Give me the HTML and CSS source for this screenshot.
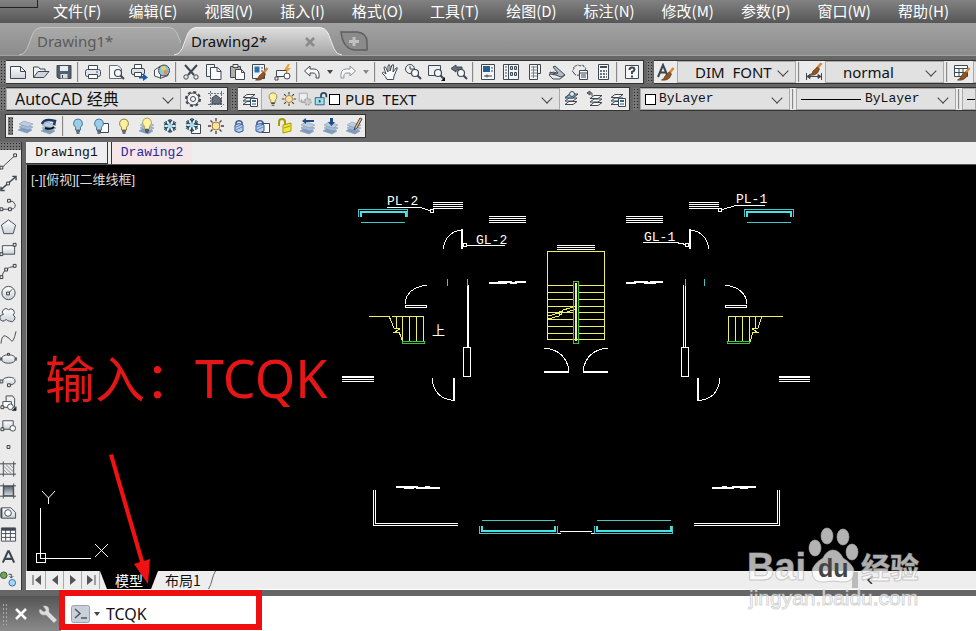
FILE: index.html
```html
<!DOCTYPE html>
<html lang="zh-CN">
<head>
<meta charset="utf-8">
<meta name="viewport" content="width=device-width, initial-scale=1">
<title>Drawing2</title>
<link rel="stylesheet" href="styles.css">
</head>
<body>
<svg class="sprite" aria-hidden="true">
  <defs>
    <linearGradient id="tabIdle" x1="0" y1="0" x2="0" y2="1"><stop offset="0" stop-color="#aaaaaa"/><stop offset="1" stop-color="#969696"/></linearGradient>
    <linearGradient id="tabActive" x1="0" y1="0" x2="0" y2="1"><stop offset="0" stop-color="#dedede"/><stop offset="1" stop-color="#a6a6a6"/></linearGradient>
    <linearGradient id="shade" x1="0" y1="0" x2="0" y2="1"><stop offset="0" stop-color="#5d6670"/><stop offset="1" stop-color="#d9dde2"/></linearGradient>
    <linearGradient id="soft" x1="0" y1="0" x2="0" y2="1"><stop offset="0" stop-color="#ffffff"/><stop offset="1" stop-color="#ccd2d9"/></linearGradient>
    <g id="stack" stroke="#7590ae" stroke-width=".5"><path d="M1 12l5-3 9 3-5 3z" fill="#7f9cc0"/><path d="M2 9l5-3 9 3-5 3z" fill="#a6bbd3"/><path d="M2 6l5-3 9 3-5 3z" fill="#bccde0"/></g>
    <g id="sheets" fill="#f8f8f8" stroke="#3f4852" stroke-width="1"><path d="M2 14.5h8l4-3H6z"/><path d="M2 11h8l4-3H6z"/><path d="M2 7.5h8l4-3H6z"/></g>
    <g id="bulbShape"><path d="M9 2a4.5 4.5 0 0 0-2.500 8.200V13h5v-2.800A4.500 4.500 0 0 0 9 2z" stroke-width="1"/><path d="M7 14h4M7.500 16h3" stroke="#444" stroke-width="1.300"/></g>
    <g id="lens"><circle cx="11" cy="10" r="3.500" fill="#f7fafc" stroke="#3f4852" stroke-width="1.200"/><path d="M13.500 12.500L17 16" stroke="#3f4852" stroke-width="2"/></g>
    <g id="brush"><path d="M16.500 4L12 9.500" stroke="#d28a37" stroke-width="2.500"/><path d="M12.500 8l2 2-2 4q-3 3-8 2 3-1 3.500-4z" fill="#8f5526" stroke="#5c3314" stroke-width=".7"/></g>
    <g id="flake" stroke="#244f63" fill="none" stroke-width="1.300"><path d="M9 2v14M3 5.500l12 7M15 5.500l-12 7"/><path d="M7 3l2 2 2-2M7 15l2-2 2 2M3 8l2.500-1L5 4M15 8l-2.500-1L13 4M3 10l2.500 1L5 14M15 10l-2.500 1L13 14"/><circle cx="9" cy="9" r="2.500" fill="#a9dceb" stroke="none"/></g>
    <g id="lockShape"><path d="M6 8V5.500a3.500 3.500 0 0 1 6 0V8" fill="none" stroke="#335a94" stroke-width="1.500"/><path d="M5 8q4-3 8 0v6q-4 3-8 0z" fill="#b8d0ee" stroke="#335a94"/><path d="M6 10l5-2M6 13l6-3" stroke="#5c84bd"/></g>
    <g id="sunShape"><path d="M9 1v3M9 14v3M1 9h3M14 9h3M3.500 3.500l2 2M12.500 12.500l2 2M14.500 3.500l-2 2M3.500 14.500l2-2" stroke="#444" stroke-width="1.300"/><circle cx="9" cy="9" r="4" fill="#ffe4a0" stroke="#a87338"/></g>
  </defs>
  <symbol id="new" viewBox="0 0 18 18"><path d="M1.500 3.500h10l5 5v7h-15z" fill="url(#soft)"/><path d="M11.500 3.500v5h5"/></symbol>
  <symbol id="open" viewBox="0 0 18 18"><path d="M1.500 14V4h5l1.500 2h5v2" fill="#eef0f2"/><path d="M1.500 14.500l4.500-6h11l-5 6z" fill="#cfd5db"/></symbol>
  <symbol id="save" viewBox="0 0 18 18"><path d="M2 2.500h14v13H3.500L2 14z" fill="#56606b"/><path d="M5 3h8v5H5z" fill="#e6edf4" stroke="none"/><path d="M5.500 11h7v4.500h-7z" fill="#d7dce1" stroke="none"/><path d="M7.500 12v3"/></symbol>
  <symbol id="print" viewBox="0 0 18 18"><path d="M4.500 7V2.500h9V7" fill="#fff"/><rect x="1.500" y="6.500" width="15" height="7" rx="2" fill="#e1e5e9"/><path d="M4.500 11.500h9v4h-9z" fill="#fff"/><path d="M12 9h2"/></symbol>
  <symbol id="preview" viewBox="0 0 18 18"><path d="M2.500 2.500h8l4 3v10h-12z" fill="#f6f7f8" stroke="#68717b"/><use href="#lens"/></symbol>
  <symbol id="publish" viewBox="0 0 18 18"><path d="M4.500 6V1.500h7V6" fill="#fff"/><rect x="1.500" y="5.500" width="13" height="6" rx="1.500" fill="#e1e5e9"/><path d="M4.500 9.500h7v4h-7z" fill="#fff"/><path d="M9 13h4v-2.500l5 4-5 3.500v-2.500H9z" fill="#155da4" stroke="none"/></symbol>
  <symbol id="globe" viewBox="0 0 18 18"><path d="M1.500 7l6-4v12l-6-2z" fill="#f8f8f8"/><path d="M7 15.500l8-3V6" fill="#f8f8f8"/><circle cx="11" cy="7.500" r="5.500" fill="#88c7d8"/><path d="M8 4l4-1 1 3-4 2z" fill="#f1d057" stroke="none"/><path d="M11 8l4-1-1 4-3 1z" fill="#e28a62" stroke="none"/></symbol>
  <symbol id="cut" viewBox="0 0 18 18"><path d="M3 2l9 10M15 2L6 12" stroke-width="2"/><circle cx="4" cy="14" r="2.200"/><circle cx="14" cy="14" r="2.200"/></symbol>
  <symbol id="copy" viewBox="0 0 18 18"><path d="M1.500 1.500h8v12h-8z" fill="#f3f4f5"/><path d="M5.500 4.500h7l3.500 3.500v8.500H5.500z" fill="#fafbfc"/><path d="M12 4.500V8.500h4"/></symbol>
  <symbol id="paste" viewBox="0 0 18 18"><path d="M2.500 3.500h10v11h-10z" fill="#b2afa7"/><path d="M5 1.500h5v3H5z" fill="#eee"/><path d="M7.500 6.500h6l3 3v7h-9z" fill="#fff"/><path d="M13.500 6.500v3h3"/></symbol>
  <symbol id="match" viewBox="0 0 18 18"><path d="M1.500 1.500h12v14h-12z" fill="#f2f4f7"/><path d="M3.500 3.500h5v6h-5z" fill="#2e70ae" stroke="none"/><path d="M10 5h2M10 8h2" /><use href="#brush" y="1"/></symbol>
  <symbol id="block" viewBox="0 0 18 18"><path d="M2.500 7.500h10v6h-10z" fill="#f6f6f6"/><circle cx="13" cy="13" r="3" fill="#fff"/><path d="M1 14h3v3H1z" fill="#f6f6f6"/><path d="M14 1l-4 6h3l-2 4 6-6h-3l2-4z" fill="#e8a531" stroke="none"/></symbol>
  <symbol id="undo" viewBox="0 0 18 18"><path d="M1.500 8L7 3v3h4q6 0 5 9H13q1-5-3-5H7v3z" fill="#fafafa"/></symbol>
  <symbol id="redo" viewBox="0 0 18 18"><path d="M16.500 8L11 3v3H7q-6 0-5 9h3q-1-5 3-5h3v3z" fill="#f8f8f8" stroke="#8e949a"/></symbol>
  <symbol id="hand" viewBox="0 0 18 18"><path d="M6 16.500q-1-3-5-6.500 1-2 4 1L3 5q0-2 1.500-1L7 9V3q1-3 2 0v5l2-6q2-1 1.500 1L12 9l3-4q2-1 1 1l-3 7-.5 3.500z" fill="#fafafa"/></symbol>
  <symbol id="zoomrt" viewBox="0 0 18 18"><circle cx="6" cy="6" r="4.500" fill="#eef1f3"/><path d="M6 3v3h4"/><use href="#lens"/></symbol>
  <symbol id="zoomwin" viewBox="0 0 18 18"><path d="M1.500 2.500h12v10h-12z" fill="#eef1f3"/><use href="#lens"/><path d="M18 18v-4l-4 4z" fill="#111" stroke="none"/></symbol>
  <symbol id="zoomprev" viewBox="0 0 18 18"><path d="M1 5.500L6 2v2h6v3H6v2z" fill="#68727d"/><use href="#lens"/></symbol>
  <symbol id="props" viewBox="0 0 18 18"><path d="M2.500 1.500h13v15h-13z" fill="#f6f7f8"/><path d="M4 3h7v6H4z" fill="#255f97" stroke="none"/><path d="M12 5h2M12 8h2M5 13h8"/><circle cx="8" cy="13" r="1" fill="#fff"/></symbol>
  <symbol id="center" viewBox="0 0 18 18"><path d="M1.500 1.500h15v15h-15zM6.500 2v14" fill="#f6f7f8"/><path d="M3 4h2M3 7h2M3 10h2M3 13h2"/><path d="M8.500 3.500h2v3h-2zM12.500 3.500h2v3h-2zM8.500 9.500h2v3h-2zM12.500 9.500h2v3h-2z" fill="#c4cad0"/></symbol>
  <symbol id="palette" viewBox="0 0 18 18"><path d="M4.500 1.500h8v15h-8zM12.500 1.500h3v9h-3" fill="#f6f7f8"/><path d="M6 4h6M6 7h6M6 10h6M6 13h6M8.500 3v12" stroke="#7b848e"/></symbol>
  <symbol id="sheetset" viewBox="0 0 18 18"><path d="M1 12l4-3 12 3-5 4H5z" fill="#e8ebee"/><path d="M2 11l6 1 5 2 4-2-10-9-2 1 5 6-2 1-6-2z" fill="#b5bdc6"/></symbol>
  <symbol id="markup" viewBox="0 0 18 18"><path d="M3 10q-3-2 0-4-1-3 2-3 2-2 4 0 4-2 4 1 3 1 1 3M3 10q1 3 5 2" stroke-dasharray="3 1"/><path d="M8.500 7.500h8v9h-8zM8 10h8M10 12h5M10 14h5" fill="#f4f6f8"/></symbol>
  <symbol id="calc" viewBox="0 0 18 18"><path d="M4.500 1.500h10v15h-10z" fill="#f6f7f8"/><path d="M6 4h7" stroke-width="2"/><path d="M6 8h7M6 11h7M6 14h7" stroke-width="1.500" stroke-dasharray="2 1"/></symbol>
  <symbol id="help" viewBox="0 0 18 18"><path d="M2.500 2.500h13v13h-13z" fill="#f6f7f8"/><path d="M6.500 7q0-2.500 2.500-2.500t2.500 2Q11.500 8 9 9v2M9 12.500v2" stroke-width="2"/></symbol>
  <symbol id="textstyle" viewBox="0 0 18 18"><path d="M1 14L6 2l5 12M3 9.500h6" stroke="#3b4550" stroke-width="2"/><use href="#brush" y="1"/></symbol>
  <symbol id="dimstyle" viewBox="0 0 18 18"><path d="M1.500 10v7M16.500 10v7M2 13.500h14M2 13.500l3-2v4zM16 13.500l-3-2v4z" fill="#444"/><use href="#brush" y="-4"/></symbol>
  <symbol id="tablestyle" viewBox="0 0 18 18"><path d="M1.500 2.500h13v11h-13zM1.500 5.500h13M1.500 9.500h13M6 5.500v8M10 5.500v8" fill="#fafafa"/><use href="#brush" y="1"/></symbol>
  <symbol id="gear" viewBox="0 0 18 18"><circle cx="9" cy="9" r="7" stroke-width="2" stroke-dasharray="3 2.500"/><circle cx="9" cy="9" r="6" fill="#f4f4f4"/><circle cx="9" cy="9" r="2.500" fill="#fff"/></symbol>
  <symbol id="crop" viewBox="0 0 18 18"><path d="M3.500 1v16M14.500 1v16M1 3.500h16M1 14.500h16" stroke="#69737d" stroke-dasharray="2 1"/><path d="M5 14V8l4-3 5 4v5z" fill="#68727c"/></symbol>
  <symbol id="layers" viewBox="0 0 18 18"><use href="#sheets"/><path d="M9.500 8.500h7v8h-7z" fill="#fff"/><path d="M11 11h4" stroke="#28669e" stroke-width="2"/><path d="M11 14h4"/></symbol>
  <symbol id="bulbOn" viewBox="0 0 18 18"><use href="#bulbShape" fill="#fff0a0" stroke="#8d8348"/></symbol>
  <symbol id="bulbBlue" viewBox="0 0 18 18"><use href="#bulbShape" fill="#9dcce8" stroke="#487a9d"/></symbol>
  <symbol id="bulbBlueSheet" viewBox="0 0 18 18"><path d="M8.500 6.500h8v9h-8z" fill="#fff"/><use href="#bulbShape" x="-2" fill="#9dcce8" stroke="#487a9d"/></symbol>
  <symbol id="bulbStack" viewBox="0 0 18 18"><use href="#stack" y="2"/><use href="#bulbShape" fill="#fff3a2" stroke="#aea262" y="-1"/></symbol>
  <symbol id="sun" viewBox="0 0 18 18"><use href="#sunShape"/></symbol>
  <symbol id="ghost" viewBox="0 0 18 18"><path d="M2.500 2.500h9v9h-9zM5 9v4h3" fill="#eee" stroke="#a2a2a2"/><circle cx="12" cy="12" r="3.500" fill="#ccc" stroke="#aaa" stroke-width="2" stroke-dasharray="2 1"/></symbol>
  <symbol id="unlock" viewBox="0 0 18 18"><path d="M9 8V5q0-3 3-3t3 3v2" stroke="#274960" stroke-width="2"/><path d="M2.500 7.500h10v8h-10z" fill="#a6dced" stroke="#245c78"/><path d="M7.500 10v3" stroke="#245c78" stroke-width="2"/></symbol>
  <symbol id="layerCurrent" viewBox="0 0 18 18"><use href="#sheets"/><path d="M2 8h8l5-4H7z" fill="#79bfdf"/><circle cx="9" cy="4" r="2.500" fill="#d8f0fa"/></symbol>
  <symbol id="layerPrev" viewBox="0 0 18 18"><use href="#sheets" x="2" y="1"/><path d="M1 3h5v3M1 3l3-2v4z"/></symbol>
  <symbol id="stackIcon" viewBox="0 0 18 18"><use href="#stack" y="1"/></symbol>
  <symbol id="stackSwap" viewBox="0 0 18 18"><use href="#stack" y="2"/><path d="M2 7q2-6 13-3l-1 4" stroke="#173c66" stroke-width="2.500"/><path d="M5 11q6 2 9-1" stroke="#111" stroke-width="2"/></symbol>
  <symbol id="freeze" viewBox="0 0 18 18"><use href="#flake"/></symbol>
  <symbol id="freezeSheet" viewBox="0 0 18 18"><path d="M7.500 7.500h9v9h-9z" fill="#fff"/><use href="#flake" x="-1" y="-1"/></symbol>
  <symbol id="lock" viewBox="0 0 18 18"><use href="#lockShape"/></symbol>
  <symbol id="lockSheet" viewBox="0 0 18 18"><path d="M8.500 6.500h8v9h-8z" fill="#fff"/><use href="#lockShape" x="-2"/></symbol>
  <symbol id="unlockGold" viewBox="0 0 18 18"><path d="M3 9V5q0-3 3-3t3 3v3" stroke="#a59b0c" stroke-width="2"/><path d="M7 8l8-2v8l-8 2z" fill="#f3e934" stroke="#a59b0c"/><path d="M8 11l6-2" stroke="#a59b0c"/></symbol>
  <symbol id="stackLeft" viewBox="0 0 18 18"><use href="#stack" y="2"/><path d="M3 4l4-3v2h8v2H7v2z" fill="#1e4d83" stroke="none"/></symbol>
  <symbol id="stackDown" viewBox="0 0 18 18"><use href="#stack" y="2"/><path d="M8 1h3v4h2l-3.500 4L6 5h2z" fill="#1e4d83" stroke="none"/></symbol>
  <symbol id="stackEdit" viewBox="0 0 18 18"><use href="#stack" y="2"/><path d="M15 1l-5 9-1 3 3-2 5-9z" fill="#f1bd71"/></symbol>
  <symbol id="dLine" viewBox="0 0 18 18"><path d="M2 16L16 3"/><path class="node" d="M0 14.500h3v3H0zM14.500 1.500h3v3h-3z"/></symbol>
  <symbol id="dXline" viewBox="0 0 18 18"><path d="M1 16L16 3M13 2h4v4M1 13v4h4" stroke-width="1.500"/><path class="node" d="M7 8h3v3H7z"/></symbol>
  <symbol id="dPoly" viewBox="0 0 18 18"><path d="M2 13.500h10q5-1 4-5-1-4-6-4"/><path class="node" d="M0 12h3v3H0zM9 12h3v3H9zM8 3h3v3H8z"/></symbol>
  <symbol id="dPenta" viewBox="0 0 18 18"><path d="M9 1.500L16.500 7 14 16H4L1.500 7z" fill="url(#soft)"/></symbol>
  <symbol id="dRect" viewBox="0 0 18 18"><path d="M2.500 5.500h13v9h-13z" fill="url(#soft)"/><path class="node" d="M0 13h3v3H0zM14 3h3v3h-3z"/></symbol>
  <symbol id="dArc" viewBox="0 0 18 18"><path d="M2 16Q3 5 16 4"/><path class="node" d="M0 14h3v3H0zM5 6h3v3H5zM14 2h3v3h-3z"/></symbol>
  <symbol id="dCircle" viewBox="0 0 18 18"><circle cx="9" cy="9" r="7" fill="url(#soft)"/><path d="M9 9l4-4"/><path class="node" d="M7 8h3v3H7z"/></symbol>
  <symbol id="dCloud" viewBox="0 0 18 18"><path d="M6.500 13.500A3.500 3.500 0 1 1 3.500 8.500 3.500 3.500 0 1 1 9 3.500a3.500 3.500 0 1 1 5 5.500 3.700 3.700 0 1 1-4 6.500q-2 0-3.500-2z" fill="url(#soft)"/></symbol>
  <symbol id="dSpline" viewBox="0 0 18 18"><path d="M1 16Q2 6 6 8t6 5 5-10"/></symbol>
  <symbol id="dEllipse" viewBox="0 0 18 18"><ellipse cx="9" cy="9" rx="7.500" ry="4.500" fill="url(#soft)"/><path class="node" d="M0 8h2v2H0zM16 8h2v2h-2zM8 3h2v2H8z"/></symbol>
  <symbol id="dEarc" viewBox="0 0 18 18"><path d="M2 9q2-4 7-4 7 0 7 4t-6 4" fill="url(#soft)"/><path class="node" d="M0 8h3v3H0zM8 12h3v3H8z"/></symbol>
  <symbol id="dInsert" viewBox="0 0 18 18"><path d="M6.500 1.500h7l2 3v9h-9z" fill="#eee"/><path d="M3 7.500h9v6H3z" fill="#fff"/><circle cx="11" cy="13" r="3" fill="#fff"/><path class="node" d="M1 12h3v3H1z"/><path d="M17 17v-4l-4 4z" fill="#111"/></symbol>
  <symbol id="dBlock" viewBox="0 0 18 18"><path d="M3 4.500h11v9H3z" fill="url(#soft)"/><circle cx="13.500" cy="12.500" r="3" fill="#f8f8f8"/><path class="node" d="M1 12h3v3H1z"/></symbol>
  <symbol id="dPoint" viewBox="0 0 18 18"><path class="node" d="M7.500 7.500h3v3h-3z"/></symbol>
  <symbol id="dHatch" viewBox="0 0 18 18"><path d="M3.500 1v16M14.500 1v16M0 3.500h17M0 14.500h17"/><path d="M4 10l4 4M4 6l8 8M6 4l8 8M10 4l4 4" stroke="#7d8791"/></symbol>
  <symbol id="dGradient" viewBox="0 0 18 18"><path d="M4 4h10v10H4z" fill="url(#shade)"/><path d="M3.500 1v16M14.500 1v16M0 3.500h17M0 14.500h17"/></symbol>
  <symbol id="dRegion" viewBox="0 0 18 18"><path d="M1.500 3.500h10l5 5v6h-15z" fill="url(#soft)"/><circle cx="8.500" cy="9" r="3.500" fill="#fff"/><path d="M1.500 4v10" stroke-width="2"/></symbol>
  <symbol id="dTable" viewBox="0 0 18 18"><path d="M1.500 1.500h15v14h-15z" fill="#fff"/><path d="M2 3h14" stroke-width="3"/><path d="M2 7.500h14M2 11.500h14M6 4v11M11 4v11"/></symbol>
  <symbol id="dText" viewBox="0 0 18 18"><path d="M3 15L8.500 3h1L15 15M5 11h8" stroke-width="2.200"/></symbol>
  <symbol id="dAdd" viewBox="0 0 18 18"><circle cx="4" cy="5" r="3.500" fill="#6cab40"/><circle cx="13" cy="13" r="3.500" fill="#a9d5f7" stroke="#2a6ca5"/><path d="M9 4h3v4M10 6l2 2 2-2"/></symbol>
</svg>

<nav class="menu" aria-label="菜单">
  <button>文件(F)</button><button>编辑(E)</button><button>视图(V)</button><button>插入(I)</button><button>格式(O)</button><button>工具(T)</button><button>绘图(D)</button><button>标注(N)</button><button>修改(M)</button><button>参数(P)</button><button>窗口(W)</button><button>帮助(H)</button>
  <i class="corner"></i>
</nav>

<div class="files">
  <button class="file"><svg class="shape" viewBox="0 0 162 29"><path d="M0 28Q5 28 8 22L14 6Q17 .5 22 .5H150Q155 .5 158 6L162 16V28z" fill="url(#tabIdle)"/><path d="M0 28Q5 28 8 22L14 6Q17 .5 22 .5H150Q155 .5 158 6L162 16" fill="none" stroke="#c2c2c2"/></svg><span>Drawing1*</span></button>
  <button class="file file-on"><svg class="shape" viewBox="0 0 168 29"><path d="M0 28Q5 28 8 22L14 6Q17 .5 22 .5H146Q151 .5 154 6L160 22Q163 28 168 28z" fill="url(#tabActive)"/><path d="M0 28Q5 28 8 22L14 6Q17 .5 22 .5H146Q151 .5 154 6L160 22Q163 28 168 28" fill="none" stroke="#ececec"/></svg><span>Drawing2*</span><svg class="close" viewBox="0 0 10 10"><path d="M1 1l8 8M9 1L1 9" stroke="#8a8a8a" stroke-width="2.500"/></svg></button>
  <button class="add" aria-label="新建"><svg viewBox="0 0 28 20"><path d="M1 1h16q10 1 10 10v8H15Q3 18 1 1z" fill="#8b8b8b" stroke="#5f5f5f" stroke-width="1.500"/><path d="M14 6v9M9 10.500h10" stroke="#c0c0c0" stroke-width="3"/></svg></button>
</div>

<div class="bars">
  <div class="bar">
    <i class="grip"></i>
    <div class="group">
      <button class="tool" aria-label="新建图形"><svg><use href="#new"/></svg></button><button class="tool" aria-label="打开"><svg><use href="#open"/></svg></button><button class="tool" aria-label="保存"><svg><use href="#save"/></svg></button><i class="sep"></i>
      <button class="tool" aria-label="打印"><svg><use href="#print"/></svg></button><button class="tool" aria-label="打印预览"><svg><use href="#preview"/></svg></button><button class="tool" aria-label="发布"><svg><use href="#publish"/></svg></button><button class="tool" aria-label="三维打印"><svg><use href="#globe"/></svg></button><i class="sep"></i>
      <button class="tool" aria-label="剪切"><svg><use href="#cut"/></svg></button><button class="tool" aria-label="复制"><svg><use href="#copy"/></svg></button><button class="tool" aria-label="粘贴"><svg><use href="#paste"/></svg></button><button class="tool" aria-label="特性匹配"><svg><use href="#match"/></svg></button><button class="tool" aria-label="块编辑器"><svg><use href="#block"/></svg></button><i class="sep"></i>
      <button class="tool" aria-label="放弃"><svg><use href="#undo"/></svg></button><button class="more" aria-label="放弃列表"></button><button class="tool" aria-label="重做"><svg><use href="#redo"/></svg></button><button class="more more-off" aria-label="重做列表"></button><i class="sep"></i>
      <button class="tool" aria-label="平移"><svg><use href="#hand"/></svg></button><button class="tool" aria-label="实时缩放"><svg><use href="#zoomrt"/></svg></button><button class="tool" aria-label="窗口缩放"><svg><use href="#zoomwin"/></svg></button><button class="tool" aria-label="缩放上一个"><svg><use href="#zoomprev"/></svg></button><i class="sep"></i>
      <button class="tool" aria-label="特性"><svg><use href="#props"/></svg></button><button class="tool" aria-label="设计中心"><svg><use href="#center"/></svg></button><button class="tool" aria-label="工具选项板"><svg><use href="#palette"/></svg></button><button class="tool" aria-label="图纸集"><svg><use href="#sheetset"/></svg></button><button class="tool" aria-label="标记集"><svg><use href="#markup"/></svg></button><button class="tool" aria-label="计算器"><svg><use href="#calc"/></svg></button><i class="sep"></i>
      <button class="tool" aria-label="帮助"><svg><use href="#help"/></svg></button>
    </div>
    <i class="grip grip-mid"></i>
    <div class="group group-fill">
      <button class="tool" aria-label="文字样式"><svg><use href="#textstyle"/></svg></button>
      <div class="pick pick-style"><select aria-label="文字样式名"><option>DIM&nbsp; FONT</option></select></div><i class="sep"></i>
      <button class="tool" aria-label="标注样式"><svg><use href="#dimstyle"/></svg></button>
      <div class="pick pick-style"><select aria-label="标注样式名"><option>normal</option></select></div><i class="sep"></i>
      <button class="tool" aria-label="表格样式"><svg><use href="#tablestyle"/></svg></button>
      <div class="rest"></div>
    </div>
  </div>

  <div class="bar">
    <i class="grip"></i>
    <div class="group">
      <div class="pick pick-space"><select aria-label="工作空间"><option>AutoCAD 经典</option></select></div>
      <button class="tool" aria-label="工作空间设置"><svg><use href="#gear"/></svg></button><button class="tool" aria-label="我的工作空间"><svg><use href="#crop"/></svg></button>
    </div>
    <i class="grip grip-mid"></i>
    <div class="group">
      <button class="tool" aria-label="图层特性"><svg><use href="#layers"/></svg></button>
      <div class="pick pick-layer"><svg><use href="#bulbOn"/></svg><svg><use href="#sun"/></svg><svg><use href="#ghost"/></svg><svg><use href="#unlock"/></svg><i class="swatch"></i><select aria-label="图层"><option>PUB&nbsp; TEXT</option></select></div>
      <button class="tool" aria-label="置为当前"><svg><use href="#layerCurrent"/></svg></button><button class="tool" aria-label="上一个图层"><svg><use href="#layerPrev"/></svg></button><button class="tool" aria-label="图层状态"><svg><use href="#layers"/></svg></button>
    </div>
    <i class="grip grip-mid"></i>
    <div class="group group-fill">
      <div class="pick pick-mono pick-color"><i class="swatch"></i><select aria-label="颜色"><option>ByLayer</option></select></div><i class="sep"></i>
      <div class="pick pick-mono pick-line"><i class="stroke"></i><select aria-label="线型"><option>ByLayer</option></select></div><i class="sep"></i>
      <div class="rest"><i class="stroke"></i></div>
    </div>
  </div>

  <div class="bar bar-float">
    <div class="group">
      <i class="grip grip-in"></i>
      <button class="tool" aria-label="图层"><svg><use href="#stackIcon"/></svg></button><button class="tool" aria-label="图层切换"><svg><use href="#stackSwap"/></svg></button><i class="sep"></i>
      <button class="tool" aria-label="关闭图层"><svg><use href="#bulbBlue"/></svg></button><button class="tool" aria-label="关闭其他图层"><svg><use href="#bulbBlueSheet"/></svg></button><button class="tool" aria-label="打开图层"><svg><use href="#bulbOn"/></svg></button><button class="tool" aria-label="打开全部图层"><svg><use href="#bulbStack"/></svg></button><button class="tool" aria-label="冻结"><svg><use href="#freeze"/></svg></button><button class="tool" aria-label="冻结其他"><svg><use href="#freezeSheet"/></svg></button><button class="tool" aria-label="解冻"><svg><use href="#sun"/></svg></button><button class="tool" aria-label="锁定"><svg><use href="#lock"/></svg></button><button class="tool" aria-label="锁定其他"><svg><use href="#lockSheet"/></svg></button><button class="tool" aria-label="解锁"><svg><use href="#unlockGold"/></svg></button><button class="tool" aria-label="恢复图层"><svg><use href="#stackLeft"/></svg></button><button class="tool" aria-label="合并图层"><svg><use href="#stackDown"/></svg></button><button class="tool" aria-label="改图层"><svg><use href="#stackEdit"/></svg></button>
    </div>
  </div>
</div>

<main class="work">
  <aside class="draw" aria-label="绘图">
    <i class="grip-top"></i>
    <button aria-label="直线"><svg><use href="#dLine"/></svg></button><button aria-label="构造线"><svg><use href="#dXline"/></svg></button><button aria-label="多段线"><svg><use href="#dPoly"/></svg></button><button aria-label="多边形"><svg><use href="#dPenta"/></svg></button><button aria-label="矩形"><svg><use href="#dRect"/></svg></button><button aria-label="圆弧"><svg><use href="#dArc"/></svg></button><button aria-label="圆"><svg><use href="#dCircle"/></svg></button><button aria-label="云线"><svg><use href="#dCloud"/></svg></button><button aria-label="样条曲线"><svg><use href="#dSpline"/></svg></button><button aria-label="椭圆"><svg><use href="#dEllipse"/></svg></button><button aria-label="椭圆弧"><svg><use href="#dEarc"/></svg></button><button aria-label="插入块"><svg><use href="#dInsert"/></svg></button><button aria-label="创建块"><svg><use href="#dBlock"/></svg></button><button aria-label="点"><svg><use href="#dPoint"/></svg></button><button aria-label="图案填充"><svg><use href="#dHatch"/></svg></button><button aria-label="渐变色"><svg><use href="#dGradient"/></svg></button><button aria-label="面域"><svg><use href="#dRegion"/></svg></button><button aria-label="表格"><svg><use href="#dTable"/></svg></button><button aria-label="多行文字"><svg><use href="#dText"/></svg></button><button aria-label="添加选定对象"><svg><use href="#dAdd"/></svg></button>
  </aside>
  <section class="view">
    <div class="docs"><button class="doc">Drawing1</button><button class="doc doc-on">Drawing2</button></div>
    <div class="canvas">
      <svg class="plan" viewBox="27 165 949 406" preserveAspectRatio="xMinYMin meet" role="img" aria-label="平面图">
        <text class="label" x="31" y="184">[-][俯视][二维线框]</text>
        <g class="white">
          <path d="M387 207.500h33l10 3M433 202.500h30M433 204.500h30M433 206.500h30M433 208.500h30M489 216.500h37M489 218.500h37M489 220.500h37M489 222.500h37M467 245.500h38"/>
          <path d="M765 205.500h-29l-14 4M689 202.500h30M689 204.500h30M689 206.500h30M689 208.500h30M626 216.500h37M626 218.500h37M626 220.500h37M626 222.500h37M643 242.500h33l10 2"/>
          <circle cx="432" cy="211" r="2"/><circle cx="720" cy="210" r="2"/>
          <path d="M463.500 243.500h3v3h-3zM685.500 243.500h3v3h-3z"/>
          <path class="thick" d="M462 229v20M690 229v20M468 285v62M454 378v23M698 378v23M544 372h25M583 372h25M342 377h32M779 377h31"/>
          <path d="M461 230Q446 232 443 249M691 230Q706 232 709 249M427 285Q406 288 405 304M725 285Q746 288 747 304M432 378Q434 399 454 400.500M720 378Q718 399 699 400.500M544 348Q566 350 569 371M608 348Q586 350 583 371"/>
          <path d="M405.500 305.500h21v2h-21zM725.500 305.500h21v2h-21zM463.500 347.500h7v29h-7zM681.500 347.500h7v29h-7zM683.500 285v62M685.500 285v62"/>
          <path d="M342 379.500h32M342 381.500h32M779 379.500h31M779 381.500h31M557 245.500h38M557 247.500h38M557 249.500h38"/>
          <path class="thick" d="M489 283h18M498 282h14M510 283h7M515 282h11M626 283h10M634 282h14M644 283h12M650 282h13M396 487h22M404 488h10M416 488h24M425 487h5M712 488h22M722 487h5M732 487h24M740 488h8"/>
          <path d="M373.500 490v35.500H458M375.500 490v33.500H458M779.500 490v35.500H694M777.500 490v33.500H694M560 531.500h32M557 533.500h4M591 533.500h4"/>
          <path d="M40.500 508v50.500H91M36.500 553.500h9v9h-9z"/>
        </g>
        <path class="axis" d="M42 491l6.500 7 6.500-7M48.500 498v6M95 544l13 13M108 544l-13 13"/>
        <g class="cyan">
          <path d="M358.500 217v-7.500h49v7.500M744.500 217v-7.500h49v7.500M361 222.500h44M747 222.500h44M447.500 279v7M467.500 279v7M685.500 279v7M704.500 279v7M482 520.500h73M597 520.500h74M479.500 526v7.500h78V526M594.500 526v7.500h78V526"/>
          <path class="thick bright" d="M361 217v-5h45v5M747 217v-5h44v5M482 526v5h73v-5M597 526v5h74v-5"/>
        </g>
        <g class="yellow">
          <path d="M547.500 251.500h57v88h-57zM548 285.500h25M548 292.500h25M548 299.500h25M548 306.500h25M548 312.500h25M548 319.500h25M548 326.500h25M548 333.500h25M579 285.500h25M579 292.500h25M579 299.500h25M579 306.500h25M579 312.500h25M579 319.500h25M579 326.500h25M579 333.500h25M548 316l11-3 2 2 2-5 14-4M548 319l11-3 1-5 4 2 12-4"/>
          <path d="M369 316.500h21M392 316.500h31.500V342M396.500 317v11M402.500 317v25M409.500 317v25M416.500 317v25M389 316l5 12 6 1-7 4 6-1 4 10M783 316.500h-21M761 316.500h-32.500V342M755.500 317v11M749.500 317v25M742.500 317v25M735.500 317v25M762 316l-4 12-6 1 7 4-6-1-3 10"/>
          <path class="thick pale" d="M576 283v58"/>
        </g>
        <path class="green" d="M573.500 281.500h5v62h-5zM402.500 341.500h22v2h-22zM727.500 341.500h22v2h-22z"/>
        <g class="cad"><text x="387" y="205">PL-2</text><text x="476" y="244">GL-2</text><text x="644" y="241">GL-1</text><text x="736" y="203">PL-1</text><text x="432" y="335">上</text></g>
        <text class="note" x="45" y="398">输入：<tspan class="note-latin">TCQK</tspan></text>
        <path class="arrow" d="M109 455l4-1 31 107 6-2-2 25-14-20 6-2z"/>
      </svg>
    </div>
    <div class="layouts">
      <button class="step" aria-label="第一个"><svg viewBox="0 0 12 12"><path d="M2 1v10" stroke="#555"/><path d="M10 1v10L4 6z" fill="#555"/></svg></button><button class="step" aria-label="上一个"><svg viewBox="0 0 12 12"><path d="M9 1v10L3 6z" fill="#555"/></svg></button><button class="step" aria-label="下一个"><svg viewBox="0 0 12 12"><path d="M3 1v10l6-5z" fill="#555"/></svg></button><button class="step" aria-label="最后一个"><svg viewBox="0 0 12 12"><path d="M10 1v10" stroke="#555"/><path d="M2 1v10l6-5z" fill="#555"/></svg></button>
      <button class="model">模型</button><button class="layout">布局1</button><svg class="slash" viewBox="0 0 8 18"><path d="M7.500 0Q5 4 4 9T.5 18" fill="none" stroke="#666"/></svg>
      <span class="split"></span><svg class="left" viewBox="0 0 6 8"><path d="M5 0L1 4l4 4" fill="none" stroke="#333" stroke-width="1.500"/></svg>
    </div>
  </section>
</main>

<form class="command">
  <div class="handle">
    <i class="dots"></i>
    <button type="button" aria-label="关闭"><svg viewBox="0 0 12 12"><path d="M1 1l10 10M11 1L1 11" stroke="#fff" stroke-width="2.500"/></svg></button>
    <button type="button" aria-label="自定义"><svg class="wrench" viewBox="0 0 20 20"><path d="M3 5l4 3 2-2-3-4q5-1 6 3v3l8 8-3 3-8-8q-6 1-7-4z" fill="#ddd" stroke="#999" stroke-width=".5"/></svg></button>
  </div>
  <div class="entry">
    <svg class="prompt" viewBox="0 0 19 18"><rect x=".5" y=".5" width="18" height="17" rx="2" fill="#c9d0d9" stroke="#9ba3ad"/><path d="M4 4l5 4.500L4 13M10 13h6" fill="none" stroke="#4c5661" stroke-width="1.500"/></svg>
    <button type="button" class="more" aria-label="最近使用的命令"></button>
    <input aria-label="命令" value="TCQK">
    <div class="frame"></div>
  </div>
</form>

<svg class="mark" viewBox="745 522 182 90" aria-label="Baidu 经验">
  <g class="mark-fill"><ellipse cx="815" cy="548" rx="6" ry="8"/><ellipse cx="827" cy="536" rx="6" ry="8"/><ellipse cx="843" cy="537" rx="6" ry="8"/><ellipse cx="852" cy="552" rx="6" ry="8"/><path d="M833 550q6 0 10 8 10 6 11 13 0 12-12 11-9-2-18 0-12 1-12-11 1-7 11-13 4-8 10-8z"/>
  <text class="mark-bai" x="747" y="580">Bai</text><text class="mark-cjk" x="861" y="579">经验</text></g>
  <text class="mark-du" x="818" y="577">du</text>
  <text class="mark-url" x="749" y="605">jingyan.baidu.com</text>
</svg>
</body>
</html>
```
FILE: styles.css
```css
* { box-sizing: border-box; }

body {
  margin: 0;
  height: 100vh;
  display: flex;
  flex-direction: column;
  position: relative;
  overflow: hidden;
  background: #666;
  font: 15px/20px "Open Sans", "Noto Sans CJK SC", sans-serif;
  color: #111;
}

button, select, input {
  font: inherit;
  color: inherit;
  border: 0;
  margin: 0;
  padding: 0;
  background: none;
}

.sprite { position: absolute; width: 0; height: 0; }

symbol { fill: none; stroke: #3f4852; }
.node { fill: #eee; stroke: #333; }

/* menu and file tabs */
.menu {
  position: relative;
  display: flex;
  flex: none;
  gap: 27px;
  height: 23px;
  padding-left: 53px;
  background: linear-gradient(#828282, #565656);
  color: #fff;
  font-family: "Noto Sans CJK SC", sans-serif;
}
.menu button { flex: none; line-height: 20px; height: 21px; }
.corner {
  position: absolute;
  left: 0;
  top: 0;
  width: 38px;
  height: 8px;
  border: solid #222;
  border-width: 0 1px 1px 0;
}

.files {
  display: flex;
  flex: none;
  height: 33px;
  padding: 4px 0 0 19px;
  background: linear-gradient(#a2a2a2, #8c8c8c);
  border-bottom: 1px solid #a2a2a2;
}
.file {
  position: relative;
  width: 155px;
  padding-left: 18px;
  text-align: left;
  color: #5a5a5a;
  font-family: "Noto Sans", sans-serif;
}
.file span { position: relative; }
.file-on { width: 166px; padding-left: 17px; color: #111; z-index: 1; }
.shape { position: absolute; left: 0; top: 0; height: 29px; }
.close { position: relative; width: 10px; height: 10px; margin-left: 38px; }
.add { width: 28px; height: 20px; margin-top: 4px; }
.add svg { display: block; width: 28px; height: 20px; }

/* toolbars */
.bars { flex: none; display: grid; gap: 3px; padding: 4px 0; }
.bar { display: flex; height: 24px; overflow: hidden; }
.group {
  display: flex;
  align-items: stretch;
  flex: none;
  border: 1px solid #333;
  border-left: 0;
  background: #ebebeb;
}
.group-fill { flex: 1; min-width: 0; border-right: 0; }
.grip {
  flex: none;
  width: 6px;
  background: radial-gradient(#222 1px, #777 1px) 0 0 / 3px 3px;
}
.grip-mid { width: 5px; margin: 1px 2px 1px 3px; }
.grip-in { width: 5px; margin: 2px 1px 2px 2px; }
.tool { flex: none; width: 23px; display: grid; place-items: center; }
.tool svg { width: 18px; height: 18px; }
.sep { flex: none; width: 2px; margin: 1px 2px; background: #888; border-right: 1px solid #ddd; }
.more { flex: none; width: 13px; display: grid; place-items: center; }
.more::before {
  content: "";
  border: 3px solid transparent;
  border-top: 4px solid #444;
  border-bottom: 0;
}
.more-off::before { border-top-color: #888; }

.pick {
  position: relative;
  display: flex;
  align-items: center;
  flex: none;
  background: #e1e1e1;
  border: 1px solid #aaa;
  font-family: "Noto Sans", "Noto Sans CJK SC", sans-serif;
}
.pick select { flex: 1; min-width: 0; appearance: none; outline: 0; }
.pick::after {
  content: "";
  position: absolute;
  right: 8px;
  top: 5px;
  width: 7px;
  height: 7px;
  border: solid #444;
  border-width: 0 1px 1px 0;
  transform: rotate(45deg);
}
.pick svg { flex: none; width: 16px; height: 16px; }
.pick-style { width: 119px; padding-left: 17px; }
.pick-space { width: 175px; padding-left: 8px; font-size: 16px; }
.pick-layer { width: 299px; padding-left: 3px; }
.pick-layer .swatch { margin-right: 5px; }
.pick-color { width: 150px; padding-left: 4px; gap: 3px; }
.pick-line { width: 160px; padding-left: 4px; gap: 4px; }
.pick-mono { font-family: "Liberation Mono", monospace; font-size: 13px; }
.swatch { flex: none; width: 11px; height: 11px; border: 1px solid #000; background: #fff; }
.stroke { flex: none; width: 60px; height: 1px; background: #000; }
.rest { flex: 1; min-width: 0; display: flex; align-items: center; padding-left: 4px; background: #e1e1e1; border: 1px solid #aaa; overflow: hidden; }
.bar-float { margin-left: 5px; }
.bar-float .group { border-left: 1px solid #333; }

/* workspace */
.work { flex: 1; min-height: 0; display: flex; gap: 4px; }
.draw {
  flex: none;
  width: 22px;
  display: flex;
  flex-direction: column;
  background: #ebebeb;
  border-right: 1px solid #333;
  overflow: hidden;
}
.draw button { flex: none; height: 22px; text-align: left; }
.draw svg { display: block; width: 17px; height: 18px; }
.grip-top { flex: none; height: 8px; background: radial-gradient(#222 1px, #777 1px) 0 0 / 3px 3px; }
.view { flex: 1; min-width: 0; display: flex; flex-direction: column; }

.docs {
  display: flex;
  flex: none;
  gap: 3px;
  height: 23px;
  background: #eee;
  border-bottom: 1px solid #555;
  font-family: "Liberation Mono", monospace;
  font-size: 13px;
}
.doc { width: 82px; border-right: 1px solid #333; border-bottom: 1px solid #333; }
.doc-on { width: 81px; border: 0; border-left: 1px solid #333; background: #f5e6e8; color: #2b2b99; }

.canvas { flex: 1; min-height: 0; position: relative; z-index: 2; border-left: 1px solid #999; }
.canvas::before { content: ""; position: absolute; inset: 0; background: #000; }
.plan { position: absolute; left: 0; top: 0; width: 100%; overflow: visible; shape-rendering: crispEdges; }
.white, .cyan, .yellow, .green, .axis { fill: none; stroke-width: 1; }
.white, .axis { stroke: #fff; }
.axis { shape-rendering: auto; }
.cyan { stroke: #48c5c9; }
.bright { stroke: #45e2e5; }
.yellow { stroke: #f0ee62; }
.pale { stroke: #eef09a; }
.green { fill: none; stroke: #39c63f; }
.thick { stroke-width: 2; }
.cad { fill: #fff; font: 13px "Liberation Mono", "Noto Sans CJK SC", monospace; }
.label { fill: #ddd; font: 13px "Liberation Sans", "Noto Sans CJK SC", sans-serif; }
.note { fill: #e51616; font: 50px "Noto Sans", "Noto Sans CJK SC", sans-serif; }
.note-latin { font-size: 52px; }
.arrow { fill: #f01212; shape-rendering: auto; }

.layouts {
  display: flex;
  flex: none;
  align-items: center;
  height: 19px;
  padding-left: 2px;
  background: #eee;
  border-bottom: 1px solid #fff;
  font: 14px/18px "Noto Sans CJK SC", sans-serif;
}
.step { width: 18px; height: 18px; display: grid; place-items: center; border-right: 1px solid #aaa; }
.step svg { width: 12px; height: 12px; }
.model { width: 58px; background: #000; color: #fff; clip-path: polygon(0 0, 100% 0, 88% 100%, 12% 100%); }
.layout { width: 50px; }
.slash { width: 8px; height: 18px; }
.split { width: 6px; height: 16px; margin-left: auto; background: #bbb; }
.left { width: 6px; height: 8px; margin: 0 103px 0 9px; }

/* command line */
.command { flex: none; display: flex; height: 41px; border-top: 6px solid #666; }
.handle {
  flex: none;
  display: flex;
  align-items: center;
  width: 61px;
  padding-left: 2px;
  background: linear-gradient(#555, #8a8a8a);
}
.handle button { flex: none; width: 26px; height: 24px; display: grid; place-items: center; }
.handle svg { width: 12px; height: 12px; }
.handle .wrench { width: 20px; height: 20px; }
.dots { width: 6px; height: 22px; background: radial-gradient(#aaa 1px, transparent 1px) 0 0 / 3px 4px; }
.entry { position: relative; flex: 1; display: flex; align-items: center; padding-left: 10px; background: #fff; }
.prompt { width: 19px; height: 18px; }
.entry input { flex: 1; min-width: 0; height: 24px; padding-left: 3px; outline: 0; font-family: "Noto Sans", sans-serif; font-size: 16px; }
.frame { position: absolute; left: -2px; top: -6px; width: 203px; height: 40px; border: 6px solid #ee1010; pointer-events: none; }

/* watermark */
.mark { position: absolute; right: 49px; bottom: 19px; width: 182px; height: 90px; z-index: 3; pointer-events: none; }
.mark-fill { fill: #fff; fill-opacity: 0.7; stroke: #aaa; stroke-opacity: 0.6; }
.mark-bai { font: bold 38px "Liberation Sans", sans-serif; }
.mark-cjk { font: bold 29px "Noto Sans CJK SC", sans-serif; }
.mark-du { fill: #444; font: bold 25px "Liberation Sans", sans-serif; }
.mark-url { fill: #fff; fill-opacity: 0.8; stroke: #aaa; stroke-opacity: 0.5; font: 21px "Liberation Sans", sans-serif; }
```
